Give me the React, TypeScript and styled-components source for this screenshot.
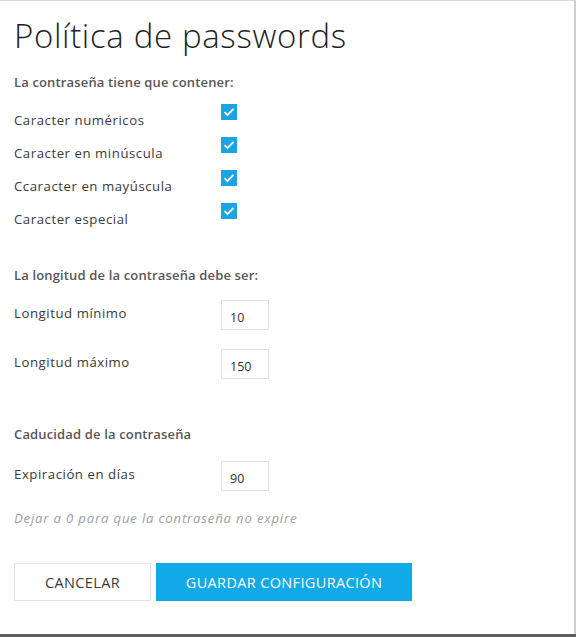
import React from "react";
import styled, { createGlobalStyle } from "styled-components";

const Global = createGlobalStyle`
  html, body { margin: 0; padding: 0; background: #fff; }
  body { font-family: "Open Sans", "Liberation Sans", sans-serif; }
  * { box-sizing: border-box; }
`;

const Page = styled.div`
  width: 576px;
  height: 637px;
  display: flex;
  flex-direction: column;
  background: #5e5e5e;
  overflow: hidden;
`;

const Modal = styled.div`
  height: 634px;
  background: #fff;
  border-top: 1px solid #dadada;
  border-right: 2px solid #cfcfcf;
  padding: 0 14px;
  display: flex;
  flex-direction: column;
`;

const Title = styled.h1`
  margin: 13px 0 0;
  font-size: 33px;
  line-height: 44px;
  font-weight: 300;
  color: #1f1f1f;
  letter-spacing: 0.65px;
`;

const SectionTitle = styled.h2<{ $mt: number }>`
  margin: ${(p) => p.$mt}px 0 0;
  font-size: 13px;
  line-height: 20px;
  font-weight: 600;
  color: #575757;
  letter-spacing: 0.15px;
`;

const List = styled.div<{ $mt: number; $gap: number }>`
  margin-top: ${(p) => p.$mt}px;
  display: flex;
  flex-direction: column;
  gap: ${(p) => p.$gap}px;
`;

const CheckRow = styled.label`
  display: grid;
  grid-template-columns: 207px 16px;
  height: 33px;
  align-items: start;
`;

const Label = styled.span<{ $mt: number }>`
  margin-top: ${(p) => p.$mt}px;
  font-size: 13.2px;
  line-height: 16px;
  color: #3a3a3a;
  letter-spacing: 0.55px;
`;

const Box = styled.span`
  width: 16px;
  height: 16px;
  background: #1ba4e3;
  display: flex;
  align-items: center;
  justify-content: center;
`;

const InputRow = styled.div`
  display: grid;
  grid-template-columns: 207px 48px;
  align-items: start;
`;

const NumInput = styled.input`
  width: 48px;
  height: 30px;
  border: 1px solid #e2e2e2;
  padding: 4px 0 0 8px;
  font-family: "Open Sans", "Liberation Sans", sans-serif;
  font-size: 12.5px;
  color: #333;
  outline: none;
`;

const Hint = styled.p`
  margin: 19px 0 0;
  font-size: 13.2px;
  line-height: 16px;
  font-style: italic;
  color: #a0a0a0;
  letter-spacing: 0.8px;
`;

const Buttons = styled.div`
  margin-top: 37px;
  display: flex;
  gap: 5px;
`;

const Button = styled.button<{ $primary?: boolean }>`
  height: 38px;
  padding: 0;
  width: ${(p) => (p.$primary ? "256px" : "137px")};
  border: 1px solid ${(p) => (p.$primary ? "#12a9e8" : "#e4e4e4")};
  background: ${(p) => (p.$primary ? "#12a9e8" : "#fff")};
  color: ${(p) => (p.$primary ? "#fff" : "#3a3a3a")};
  font-family: "Open Sans", "Liberation Sans", sans-serif;
  font-size: 14.5px;
  letter-spacing: 0.35px;
  text-transform: uppercase;
`;

const Check = () => (
  <svg width="12" height="10" viewBox="0 0 12 10">
    <path d="M1.5 5.2 L4.5 8 L10.5 1.8" fill="none" stroke="#fff" strokeWidth="1.8" />
  </svg>
);

const checks = [
  "Caracter numéricos",
  "Caracter en minúscula",
  "Ccaracter en mayúscula",
  "Caracter especial",
];

export default function App() {
  return (
    <>
      <Global />
      <Page>
        <Modal>
          <Title>Política de passwords</Title>
          <SectionTitle $mt={14}>La contraseña tiene que contener:</SectionTitle>
          <List $mt={12} $gap={0}>
            {checks.map((c) => (
              <CheckRow key={c}>
                <Label $mt={8}>{c}</Label>
                <Box>
                  <Check />
                </Box>
              </CheckRow>
            ))}
          </List>
          <SectionTitle $mt={29}>La longitud de la contraseña debe ser:</SectionTitle>
          <List $mt={15} $gap={19}>
            <InputRow>
              <Label $mt={5}>Longitud mínimo</Label>
              <NumInput defaultValue="10" />
            </InputRow>
            <InputRow>
              <Label $mt={5}>Longitud máximo</Label>
              <NumInput defaultValue="150" />
            </InputRow>
          </List>
          <SectionTitle $mt={45}>Caducidad de la contraseña</SectionTitle>
          <List $mt={17} $gap={0}>
            <InputRow>
              <Label $mt={5}>Expiración en días</Label>
              <NumInput defaultValue="90" />
            </InputRow>
          </List>
          <Hint>Dejar a 0 para que la contraseña no expire</Hint>
          <Buttons>
            <Button>Cancelar</Button>
            <Button $primary>Guardar configuración</Button>
          </Buttons>
        </Modal>
      </Page>
    </>
  );
}
